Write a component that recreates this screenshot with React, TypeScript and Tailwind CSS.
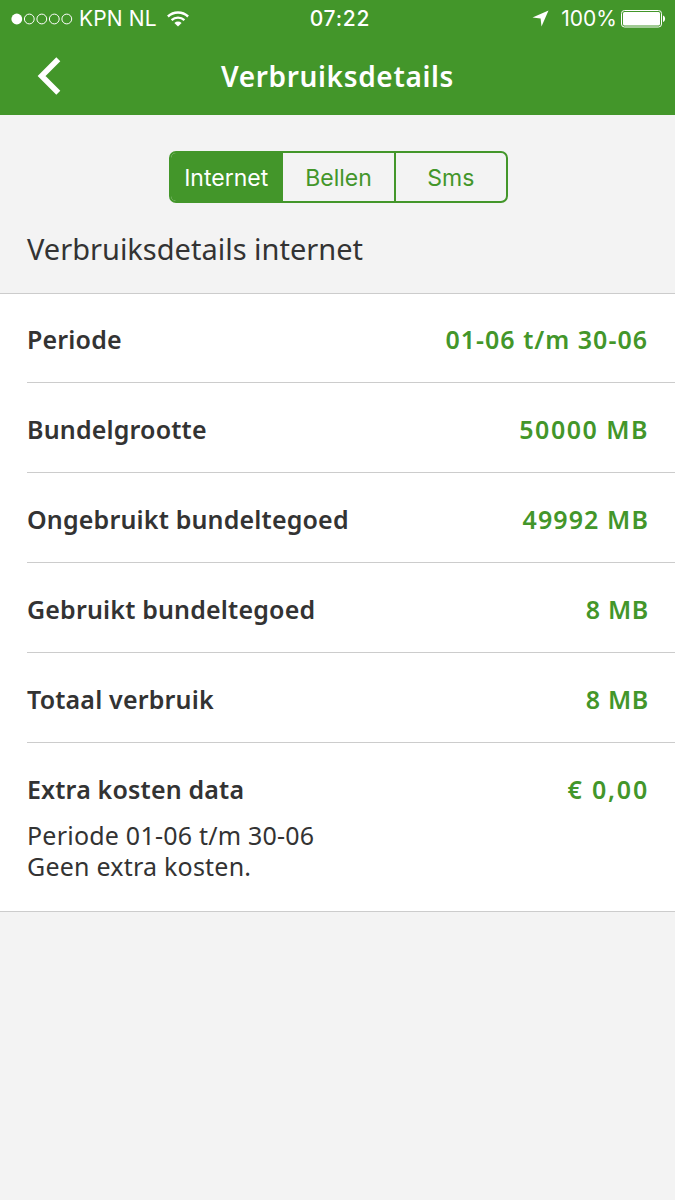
import React, { useState } from 'react';
import clsx from 'clsx';

interface UsageRow {
  label: string;
  value: string;
  valueClass: string;
}

const TABS = ['Internet', 'Bellen', 'Sms'];

const ROWS: UsageRow[] = [
  { label: 'Periode', value: '01-06 t/m 30-06', valueClass: 'tracking-[1px]' },
  { label: 'Bundelgrootte', value: '50000 MB', valueClass: 'tracking-[1.5px] -mr-px' },
  { label: 'Ongebruikt bundeltegoed', value: '49992 MB', valueClass: 'tracking-[1.1px] -mr-px' },
  { label: 'Gebruikt bundeltegoed', value: '8 MB', valueClass: 'tracking-[0.7px] -mr-px' },
  { label: 'Totaal verbruik', value: '8 MB', valueClass: 'tracking-[0.7px] -mr-px' },
];

const StatusBar: React.FC = () => (
  <div className="grid h-[37px] grid-cols-[1fr_auto_1fr] items-center pl-[11px] pr-[9px] font-['Inter',sans-serif] text-[21px] leading-none">
    <div className="flex items-center">
      <svg width="62" height="12" viewBox="0 0 62 12" fill="none" stroke="white">
        <circle cx="5.8" cy="6" r="5.4" fill="white" stroke="none" />
        <circle cx="18.3" cy="6" r="4.9" />
        <circle cx="30.8" cy="6" r="4.9" />
        <circle cx="43.3" cy="6" r="4.9" />
        <circle cx="55.8" cy="6" r="4.9" />
      </svg>
      <span className="ml-[6px] whitespace-nowrap tracking-[0.15px]">KPN NL</span>
      <svg className="ml-[10px]" width="22" height="16" viewBox="0 0 22 16" fill="none" stroke="white" strokeWidth="2.4">
        <path d="M0.9 5.5C6.6 .2 15.4 .2 21.1 5.5" />
        <path d="M4.6 9.1C8.2 5.8 13.8 5.8 17.4 9.1" />
        <path d="M7.4 11.9C9.5 10.1 12.5 10.1 14.6 11.9L11 15.5Z" fill="white" stroke="none" />
      </svg>
    </div>
    <span className="pl-[3px] font-medium tracking-[0.8px]">07:22</span>
    <div className="flex items-center justify-end">
      <svg width="17" height="17" viewBox="0 0 17 17" fill="white">
        <path d="M16.5 .5L9.5 16.5L8.6 8.5L.5 7.6Z" />
      </svg>
      <span className="ml-[12px]">100%</span>
      <svg className="ml-[4px]" width="45" height="18" viewBox="0 0 45 18" fill="white">
        <rect x=".5" y=".5" width="40" height="16.5" rx="3" fill="none" stroke="white" />
        <rect x="2" y="2" width="37" height="13.5" rx="1.5" />
        <path d="M42 5.5C44.8 6 44.8 11.5 42 12Z" />
      </svg>
    </div>
  </div>
);

const App: React.FC = () => {
  const [activeTab, setActiveTab] = useState('Internet');

  return (
    <div className="min-h-[1200px] w-[675px] bg-[#f3f3f3] font-['Noto_Sans',sans-serif] text-[#333]">
      <header className="h-[115px] bg-[#43962a] text-white">
        <StatusBar />
        <div className="grid h-[78px] grid-cols-[100px_1fr_100px] items-center">
          <button className="ml-[37px]" aria-label="Terug">
            <svg width="24" height="38" viewBox="0 0 24 38" fill="none" stroke="white" strokeWidth="5.6">
              <path d="M21.3 2.2L4.6 19L21.3 35.8" />
            </svg>
          </button>
          <h1 className="text-center text-[28px] font-semibold tracking-[0.65px]">Verbruiksdetails</h1>
        </div>
      </header>

      {/* Tabs and section title */}
      <div className="flex h-[179px] flex-col border-b border-[#ccc] pt-9">
        <div className="ml-[169px] flex h-[52px] w-[339px] overflow-hidden rounded-[7px] border-2 border-[#43962a] font-['Inter',sans-serif] text-[23px]">
          {TABS.map((tab) => (
            <button
              key={tab}
              onClick={() => setActiveTab(tab)}
              className={clsx(
                'flex-1 border-r-2 border-[#43962a] pt-0.5 last:border-r-0',
                tab === activeTab ? 'bg-[#43962a] text-white' : 'text-[#43962a]'
              )}
            >
              {tab}
            </button>
          ))}
        </div>
        <h2 className="ml-[27px] mt-[27px] text-[29px] leading-[38px]">Verbruiksdetails internet</h2>
      </div>

      {/* Usage list */}
      <main className="border-b border-[#ccc] bg-white pl-[27px]">
        {ROWS.map((row) => (
          <div key={row.label} className="flex h-[90px] items-center justify-between border-b border-[#ccc] pr-[27px] pt-1 text-[25px] font-semibold first:h-[89px]">
            <span className="tracking-[0.17px]">{row.label}</span>
            <span className={clsx('text-[#43962a]', row.valueClass)}>{row.value}</span>
          </div>
        ))}
        <div className="h-[168px] pr-[27px] pt-[29px]">
          <div className="flex justify-between text-[25px] font-semibold leading-[34px]">
            <span className="tracking-[0.17px]">Extra kosten data</span>
            <span className="-mr-px tracking-[1.8px] text-[#43962a]">€ 0,00</span>
          </div>
          <div className="mt-[14px] text-[25px] leading-[31px] tracking-[0.22px]">
            <p>Periode 01-06 t/m 30-06</p>
            <p>Geen extra kosten.</p>
          </div>
        </div>
      </main>
    </div>
  );
};

export default App;
